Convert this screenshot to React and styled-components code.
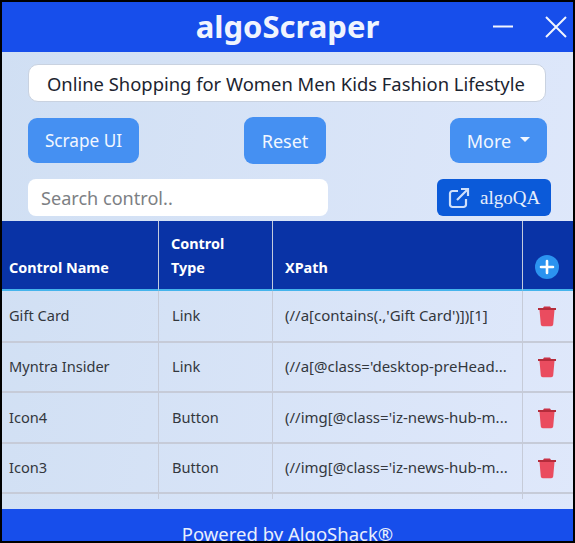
import React from "react";
import styled, { createGlobalStyle } from "styled-components";

const GlobalStyle = createGlobalStyle`
  html, body {
    margin: 0;
    padding: 0;
    background: #000;
  }
  * {
    box-sizing: border-box;
  }
`;

const Page = styled.div`
  width: 575px;
  height: 543px;
  border: 2px solid #000;
  display: flex;
  flex-direction: column;
  overflow: hidden;
  font-family: "Noto Sans", "Open Sans", sans-serif;
  background: linear-gradient(100deg, #d0dff3 0%, #dfe8fb 100%);
`;

const Header = styled.header`
  height: 50px;
  flex: none;
  background: #174eeb;
  display: flex;
  align-items: center;
  justify-content: center;
  position: relative;
`;

const Title = styled.h1`
  margin: 0 0 2px;
  color: #f0f4fe;
  font-size: 31px;
  font-weight: 700;
  line-height: 44px;
`;

const WindowControls = styled.div`
  position: absolute;
  right: 5px;
  top: 13px;
  display: flex;
  align-items: center;
  gap: 30px;
`;

const Controls = styled.section`
  padding: 12px 27px 5px 26px;
  display: flex;
  flex-direction: column;
`;

const PageTitle = styled.div`
  height: 38px;
  width: 518px;
  background: #fff;
  border: 1px solid #c9d2e0;
  border-radius: 10px;
  padding-left: 18px;
  display: flex;
  align-items: center;
  color: #1c2430;
  font-size: 18.4px;
  white-space: nowrap;
`;

const ButtonRow = styled.div`
  display: flex;
  align-items: center;
  gap: 105px;
  margin-top: 15px;
`;

const ActionButton = styled.button`
  flex: none;
  width: ${(p) => p.$width}px;
  height: ${(p) => p.$height}px;
  margin-right: ${(p) => p.$after || 0}px;
  background: #4590f2;
  color: #f2f7ff;
  border: none;
  border-radius: 9px;
  font-family: inherit;
  font-size: ${(p) => p.$size || 18}px;
  display: flex;
  align-items: center;
  justify-content: center;
  gap: 9px;
  padding: 0;
`;

const Caret = styled.span`
  width: 0;
  height: 0;
  border-left: 5px solid transparent;
  border-right: 5px solid transparent;
  border-top: 5px solid #f2f7ff;
  margin-top: -3px;
`;

const SearchRow = styled.div`
  display: flex;
  justify-content: space-between;
  margin-top: 15px;
  width: 523px;
`;

const SearchBox = styled.div`
  width: 300px;
  height: 37px;
  background: #fff;
  border-radius: 8px;
  padding-left: 13px;
  display: flex;
  align-items: center;
  color: #7d7f84;
  font-size: 18.1px;
`;

const QaLink = styled.a`
  width: 114px;
  height: 37px;
  background: #0b5ad9;
  border-radius: 6px;
  display: flex;
  align-items: center;
  padding-left: 10px;
  gap: 9px;
  color: #e6eefc;
  font-family: "Liberation Serif", serif;
  font-size: 19px;
`;

const TableWrap = styled.div`
  height: 288px;
  flex: none;
  overflow: hidden;
`;

const Table = styled.table`
  width: 571px;
  border-collapse: separate;
  border-spacing: 0;
  table-layout: fixed;
`;

const HeadCell = styled.th`
  height: 70px;
  background: #0933a6;
  border-bottom: 2px solid #45b4ec;
  border-right: ${(p) => (p.$last ? "none" : "1px solid #c3cbdd")};
  color: #fff;
  font-size: 14.4px;
  font-weight: 700;
  line-height: 24px;
  text-align: left;
  vertical-align: bottom;
  padding: 0 0 9px ${(p) => p.$pad}px;
`;

const Cell = styled.td`
  height: ${(p) => p.$height}px;
  border-bottom: 2px solid #c6cbd8;
  border-right: ${(p) => (p.$last ? "none" : "1px solid #c6cbd8")};
  color: #33373d;
  font-size: ${(p) => p.$size || 14.6}px;
  padding: 0 0 2px ${(p) => p.$pad}px;
  white-space: nowrap;
  overflow: hidden;
`;

const FillerCell = styled.td`
  height: 5px;
  padding: 0;
  border-right: ${(p) => (p.$last ? "none" : "1px solid #c6cbd8")};
`;

const IconCell = styled.div`
  display: flex;
  justify-content: center;
  padding: 2px 2px 0 0;
`;

const AddIconCell = styled(IconCell)`
  padding: 0 3px 0 0;
  margin-bottom: 1px;
`;

const Footer = styled.footer`
  height: 32px;
  margin-top: auto;
  flex: none;
  background: #174eeb;
  color: #e8effd;
  font-size: 18.5px;
  line-height: 26px;
  padding-top: 12px;
  text-align: center;
  overflow: hidden;
  white-space: nowrap;
`;

const MinimizeIcon = () => (
  <svg width="22" height="22" viewBox="0 0 22 22">
    <path d="M1 10.5h20" stroke="#f2f5fe" strokeWidth="2" />
  </svg>
);

const CloseIcon = () => (
  <svg width="24" height="24" viewBox="0 0 24 24">
    <path d="M2 2l20 20M22 2L2 22" stroke="#f2f5fe" strokeWidth="2" />
  </svg>
);

const ExternalIcon = () => (
  <svg width="24" height="24" viewBox="0 0 24 24" fill="none" stroke="#cfe0fb" strokeWidth="2.2">
    <path d="M11 5H5.5A2.5 2.5 0 0 0 3 7.5v11A2.5 2.5 0 0 0 5.500 21h11a2.500 2.500 0 0 0 2.500-2.500V13" />
    <path d="M10 14L21 3M14 3h7v7" />
  </svg>
);

const PlusIcon = () => (
  <svg width="24" height="24" viewBox="0 0 24 24">
    <circle cx="12" cy="12" r="12" fill="#2b93f0" />
    <path d="M12 6v12M6 12h12" stroke="#fff" strokeWidth="2.6" strokeLinecap="round" />
  </svg>
);

const TrashIcon = () => (
  <svg width="20" height="22" viewBox="0 0 20 22">
    <path d="M7 1.500h6l1 1.500H6z" fill="#c93347" />
    <path d="M1 3h18v2H1z" fill="#b52c3b" />
    <path d="M2.500 5h15l-1.300 14.500a2 2 0 0 1-2 1.800H5.800a2 2 0 0 1-2-1.800z" fill="#ea4c5f" />
  </svg>
);

const rows = [
  ["Gift Card", "Link", "(//a[contains(.,'Gift Card')])[1]"],
  ["Myntra Insider", "Link", "(//a[@class='desktop-preHead..."],
  ["Icon4", "Button", "(//img[@class='iz-news-hub-m..."],
  ["Icon3", "Button", "(//img[@class='iz-news-hub-m..."],
];

const rowHeights = [52, 50, 51, 50];

const App = () => {
  return (
    <Page>
      <GlobalStyle />
      <Header>
        <Title>algoScraper</Title>
        <WindowControls>
          <MinimizeIcon />
          <CloseIcon />
        </WindowControls>
      </Header>
      <Controls>
        <PageTitle>Online Shopping for Women Men Kids Fashion Lifestyle</PageTitle>
        <ButtonRow>
          <ActionButton $width={111} $height={45} $size={17.2}>Scrape UI</ActionButton>
          <ActionButton $width={82} $height={47} $after={19}>Reset</ActionButton>
          <ActionButton $width={97} $height={45}>
            More <Caret />
          </ActionButton>
        </ButtonRow>
        <SearchRow>
          <SearchBox>Search control..</SearchBox>
          <QaLink>
            <ExternalIcon />
            algoQA
          </QaLink>
        </SearchRow>
      </Controls>
      <TableWrap>
        <Table>
          <colgroup>
            <col width="157" />
            <col width="114" />
            <col width="250" />
            <col width="50" />
          </colgroup>
          <thead>
            <tr>
              <HeadCell $pad={7}>Control Name</HeadCell>
              <HeadCell $pad={12}>Control<br />Type</HeadCell>
              <HeadCell $pad={12}>XPath</HeadCell>
              <HeadCell $pad={0} $last>
                <AddIconCell><PlusIcon /></AddIconCell>
              </HeadCell>
            </tr>
          </thead>
          <tbody>
            {rows.map(([name, type, xpath], i) => (
              <tr key={name}>
                <Cell $height={rowHeights[i]} $pad={7}>{name}</Cell>
                <Cell $height={rowHeights[i]} $pad={13}>{type}</Cell>
                <Cell $height={rowHeights[i]} $pad={12} $size={15}>{xpath}</Cell>
                <Cell $height={rowHeights[i]} $pad={0} $last>
                  <IconCell><TrashIcon /></IconCell>
                </Cell>
              </tr>
            ))}
            <tr>
              <FillerCell />
              <FillerCell />
              <FillerCell />
              <FillerCell $last />
            </tr>
          </tbody>
        </Table>
      </TableWrap>
      <Footer>Powered by AlgoShack®</Footer>
    </Page>
  );
};

export default App;
